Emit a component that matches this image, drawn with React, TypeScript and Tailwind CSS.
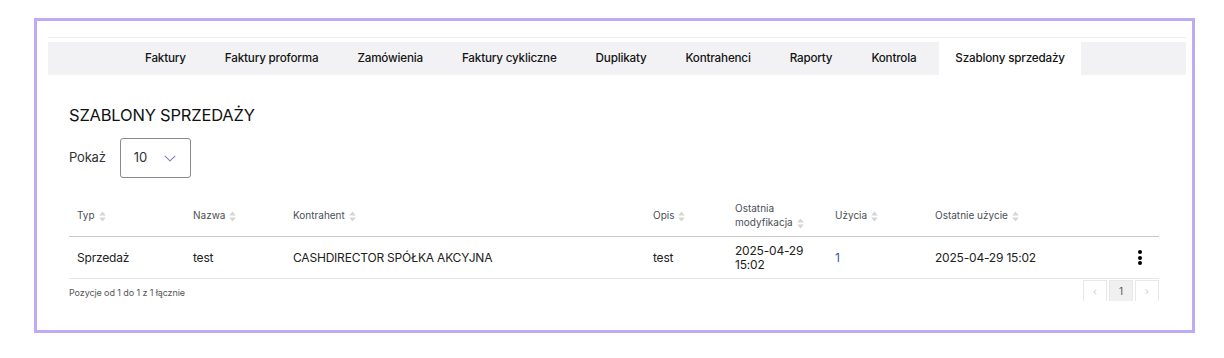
import React from 'react'

const tabs = [
  'Faktury',
  'Faktury proforma',
  'Zamówienia',
  'Faktury cykliczne',
  'Duplikaty',
  'Kontrahenci',
  'Raporty',
  'Kontrola',
  'Szablony sprzedaży',
]

const cols = 'grid grid-cols-[116px_100px_360px_82px_100px_100px_1fr_39px]'

const SortIcon = () => (
  <svg width="7" height="11" viewBox="0 0 7 11" className="ml-[4px] shrink-0">
    <path d="M3.5 0.5 L6.8 4.5 L0.2 4.5 Z" fill="#d6d6d6" />
    <path d="M3.5 10.5 L6.8 6.5 L0.2 6.5 Z" fill="#d6d6d6" />
  </svg>
)

const Th = ({ children }: { children: React.ReactNode }) => (
  <div className="flex items-end px-[8px] text-[10px] leading-[14px] text-[#4a4f57]">
    <span>{children}</span>
    <SortIcon />
  </div>
)

const Kebab = () => (
  <div className="flex flex-col items-center gap-[1.5px]">
    <span className="w-[4px] h-[4px] rounded-full bg-black" />
    <span className="w-[4px] h-[4px] rounded-full bg-black" />
    <span className="w-[4px] h-[4px] rounded-full bg-black" />
  </div>
)

const App = () => {
  const active = 'Szablony sprzedaży'

  return (
    <div className="w-full h-[358px] bg-white pt-[18px] pl-[34px] font-['Inter',sans-serif]">
      <div className="w-[1161px] h-[315px] border-[3px] border-[#bfaaf8] pt-[16px] pl-[11px] pr-[6px]">
        <div className="h-px bg-[#eeeeef]" />

        {/* tabs */}
        <div className="mt-[4px] h-[33px] flex gap-[7px] bg-[#f2f2f4] pl-[81px]">
          {tabs.map((t) => (
            <div
              key={t}
              className={`px-[16px] flex items-center text-[11.7px] tracking-[-0.2px] font-medium text-[#141414] ${t === active ? 'bg-white' : ''}`}
            >
              {t}
            </div>
          ))}
        </div>

        <div className="pl-[21px] pr-[27px]">
          <h1 className="mt-[28px] text-[16.5px] leading-[24px] tracking-[-0.2px] text-[#111]">SZABLONY SPRZEDAŻY</h1>

          <div className="mt-[11px] flex items-center gap-[14px]">
            <span className="text-[13px] tracking-[-0.2px] text-[#333]">Pokaż</span>
            <div className="w-[71px] h-[40px] border border-[#8a8a8a] rounded-[3px] flex items-center pl-[13px] gap-[17px]">
              <span className="text-[13px] text-[#333]">10</span>
              <svg width="12" height="7" viewBox="0 0 12 7">
                <path d="M0.8 0.8 L6 6 L11.2 0.8" fill="none" stroke="#8b84c2" strokeWidth="1.1" />
              </svg>
            </div>
          </div>

          {/* table */}
          <div className="mt-[15px]">
            <div className={`${cols} h-[44px] items-center border-b border-[#c8c8c8]`}>
              <Th>Typ</Th>
              <Th>Nazwa</Th>
              <Th>Kontrahent</Th>
              <Th>Opis</Th>
              <Th>
                Ostatnia
                <br />
                modyfikacja
              </Th>
              <Th>Użycia</Th>
              <Th>Ostatnie użycie</Th>
              <div />
            </div>

            <div className={`${cols} h-[42px] items-center border-b border-[#e6e6e6] text-[12px] leading-[14px] tracking-[-0.2px] text-[#222]`}>
              <div className="px-[8px]">Sprzedaż</div>
              <div className="px-[8px]">test</div>
              <div className="px-[8px]">CASHDIRECTOR SPÓŁKA AKCYJNA</div>
              <div className="px-[8px]">test</div>
              <div className="px-[8px]">
                2025-04-29
                <br />
                15:02
              </div>
              <div className="px-[8px] text-[#2360a8]">1</div>
              <div className="px-[8px]">2025-04-29 15:02</div>
              <div className="flex justify-center">
                <Kebab />
              </div>
            </div>

            <div className="flex justify-between items-start pt-[1px]">
              <span className="mt-[6px] text-[9px] tracking-[-0.1px] text-[#555]">Pozycje od 1 do 1 z 1 łącznie</span>
              <div className="flex gap-[2px]">
                <div className="w-[24px] h-[21px] border-t border-x border-[#e8e8e8] flex items-center justify-center text-[10px] text-[#ccc]">‹</div>
                <div className="w-[24px] h-[21px] bg-[#f0f0f0] border-t border-x border-[#e8e8e8] flex items-center justify-center text-[10px] text-[#555]">1</div>
                <div className="w-[24px] h-[21px] border-t border-x border-[#e8e8e8] flex items-center justify-center text-[10px] text-[#ccc]">›</div>
              </div>
            </div>
          </div>
        </div>
      </div>
    </div>
  )
}

export default App
